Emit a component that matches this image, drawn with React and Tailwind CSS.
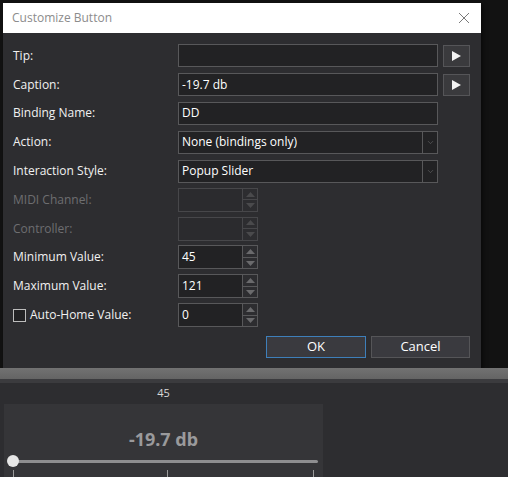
import { ChevronDown } from 'lucide-react';

const ui = { fontFamily: '"Segoe UI", "Open Sans", "Noto Sans", sans-serif' };

function Label({ children, disabled }) {
  return (
    <div className={`w-[165px] shrink-0 text-[12px] ${disabled ? 'text-[#6e6e70]' : 'text-[#f1f1f1]'}`}>
      {children}
    </div>
  );
}

function TextBox({ value = '', arrow }) {
  return (
    <>
      <div className="w-[260px] h-[23px] border border-[#58585a] bg-[#222224] px-[3px] flex items-center text-[12px] text-white">
        {value}
      </div>
      {arrow && (
        <button className="ml-[5px] w-[27px] h-[22px] border border-[#555558] bg-[#3a3a3d] flex items-center justify-center">
          <svg width="9" height="10" viewBox="0 0 9 10">
            <path d="M0 0 L9 5 L0 10 Z" fill="#f2f2f2" />
          </svg>
        </button>
      )}
    </>
  );
}

function Combo({ value }) {
  return (
    <div className="w-[260px] h-[23px] border border-[#58585a] bg-[#222224] flex text-[12px] text-white">
      <div className="flex-1 px-[3px] flex items-center">{value}</div>
      <div className="w-[15px] border-l border-[#58585a] flex items-center justify-center">
        <ChevronDown size={9} strokeWidth={1.5} className="text-[#6c6c6e]" />
      </div>
    </div>
  );
}

function Spinner({ value = '', disabled }) {
  const arrow = disabled ? '#4a4a4c' : '#6a6a6c';
  return (
    <div className={`w-[80px] h-[24px] border ${disabled ? 'border-[#47474a]' : 'border-[#58585a]'} flex text-[12px] text-white`}>
      <div className={`flex-1 px-[3px] flex items-center ${disabled ? 'bg-[#2b2b2e]' : 'bg-[#222224]'}`}>{value}</div>
      <div className={`w-[15px] border-l ${disabled ? 'border-[#47474a]' : 'border-[#58585a]'} flex flex-col`}>
        <div className="flex-1 flex items-center justify-center">
          <svg width="9" height="5" viewBox="0 0 9 5"><path d="M0 5 L4.5 0 L9 5 Z" fill={arrow} /></svg>
        </div>
        <div className={`flex-1 border-t ${disabled ? 'border-[#47474a]' : 'border-[#58585a]'} flex items-center justify-center`}>
          <svg width="9" height="5" viewBox="0 0 9 5"><path d="M0 0 L9 0 L4.5 5 Z" fill={arrow} /></svg>
        </div>
      </div>
    </div>
  );
}

function Row({ children }) {
  return <div className="h-[23.8px] flex items-center">{children}</div>;
}

export default function App() {
  return (
    <div className="w-[508px] h-[477px] bg-[#2d2d30] flex flex-col overflow-hidden" style={ui}>
      {/* dialog over dark backdrop */}
      <div className="h-[368px] bg-[#121212] pt-[3px] pl-[3px] shrink-0">
        <div className="w-[478px] h-[365px] bg-[#2d2d30] flex flex-col shadow-[2px_2px_4px_rgba(0,0,0,0.5)]">
          <div className="h-[30px] bg-white flex items-center justify-between pl-[9px] pr-[11px] shrink-0">
            <span className="text-[12px] text-[#8c8c8c]">Customize Button</span>
            <svg width="12" height="12" viewBox="0 0 12 12">
              <path d="M1 1 L11 11 M11 1 L1 11" stroke="#7a7a7a" strokeWidth="1" />
            </svg>
          </div>

          <div className="flex flex-col gap-[5px] pl-[10px] pt-[11px]">
            <Row><Label>Tip:</Label><TextBox arrow /></Row>
            <Row><Label>Caption:</Label><TextBox value="-19.7 db" arrow /></Row>
            <Row><Label>Binding Name:</Label><TextBox value="DD" /></Row>
            <Row><Label>Action:</Label><Combo value="None (bindings only)" /></Row>
            <Row><Label>Interaction Style:</Label><Combo value="Popup Slider" /></Row>
            <Row><Label disabled>MIDI Channel:</Label><Spinner disabled /></Row>
            <Row><Label disabled>Controller:</Label><Spinner disabled /></Row>
            <Row><Label>Minimum Value:</Label><Spinner value="45" /></Row>
            <Row><Label>Maximum Value:</Label><Spinner value="121" /></Row>
            <Row>
              <div className="w-[165px] shrink-0 flex items-center gap-[4px] text-[12px] text-[#f1f1f1]">
                <span className="w-[13px] h-[13px] border border-[#bdbdbd] bg-[#222224]" />
                Auto-Home Value:
              </div>
              <Spinner value="0" />
            </Row>
          </div>

          <div className="flex justify-end gap-[5px] pr-[11px] mt-[9px]">
            <button className="w-[100px] h-[22px] border border-[#3e7fba] bg-[#3a3a3f] text-[13px] text-white">OK</button>
            <button className="w-[99px] h-[22px] border border-[#555558] bg-[#3a3a3f] text-[13px] text-white">Cancel</button>
          </div>
        </div>
      </div>

      <div className="h-[11px] shrink-0 bg-gradient-to-b from-[#727272] to-[#646464]" />
      <div className="h-[4px] shrink-0 bg-[#3b3b3e]" />

      {/* popup slider preview */}
      <div className="flex-1 pl-[4px]">
        <div className="w-[319px] h-[21px] flex items-center justify-center text-[11px] text-[#d8d8d8]">45</div>
        <div className="w-[319px] h-[80px] bg-[#353538] flex flex-col pt-[26px]">
          <div className="text-center text-[18px] font-bold text-[#9a9a9c] leading-none" style={{ fontFamily: '"Noto Sans", sans-serif' }}>-19.7 db</div>
          <div className="relative ml-[3px] w-[312px] h-[12px] mt-[7px]">
            <div className="absolute left-[7px] right-[1px] top-[5px] h-[3px] rounded-full bg-[#8e8e90]" />
            <div className="absolute left-0 top-0 w-[12px] h-[12px] rounded-full bg-[#e6e6e6]" />
          </div>
          <div className="flex ml-[9px] mt-[3px]">
            <span className="w-px h-[7px] bg-[#9a9a9a]" />
            <span className="w-px h-[7px] bg-[#9a9a9a] ml-[153px]" />
            <span className="w-px h-[7px] bg-[#9a9a9a] ml-[145px]" />
          </div>
        </div>
      </div>
    </div>
  );
}
